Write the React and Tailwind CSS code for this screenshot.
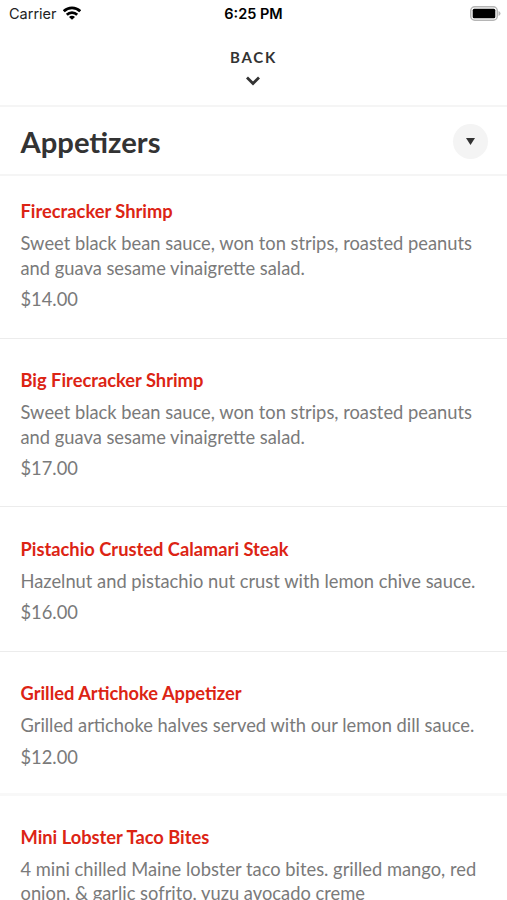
import { clsx } from "clsx";

const items = [
  {
    name: "Firecracker Shrimp",
    lines: ["Sweet black bean sauce, won ton strips, roasted peanuts", "and guava sesame vinaigrette salad."],
    price: "$14.00",
  },
  {
    name: "Big Firecracker Shrimp",
    lines: ["Sweet black bean sauce, won ton strips, roasted peanuts", "and guava sesame vinaigrette salad."],
    price: "$17.00",
  },
  {
    name: "Pistachio Crusted Calamari Steak",
    lines: ["Hazelnut and pistachio nut crust with lemon chive sauce."],
    price: "$16.00",
  },
  {
    name: "Grilled Artichoke Appetizer",
    lines: ["Grilled artichoke halves served with our lemon dill sauce."],
    price: "$12.00",
    divider: "pb-[24.75px] border-b-3 border-[#f8f8f8]",
  },
  {
    name: "Mini Lobster Taco Bites",
    lines: ["4 mini chilled Maine lobster taco bites. grilled mango, red", "onion, & garlic sofrito, yuzu avocado creme"],
    divider: "-mt-px",
  },
];

function StatusBar() {
  return (
    <div className="grid h-7 grid-cols-3 items-center pr-1.5 pl-[9px] font-['Inter',sans-serif] text-[14.5px] text-black">
      <div className="flex items-center gap-1.5">
        <span className="text-[#222]">Carrier</span>
        <svg className="-mt-0.5" width="18" height="14" viewBox="0 0 18 14" fill="none" stroke="#000" strokeWidth="2.7">
          <path d="M.8 5.2a11.6 11.6 0 0 1 16.4 0" />
          <path d="M3.8 8.8a7.4 7.4 0 0 1 10.4 0" />
          <path d="M9 13.8 6 10.9a4.2 4.2 0 0 1 6 0z" fill="#000" stroke="none" />
        </svg>
      </div>
      <div className="pr-[3px] text-center font-semibold">6:25 PM</div>
      <svg className="-mt-0.5 justify-self-end" width="31" height="15" viewBox="0 0 31 15">
        <rect x="0.75" y="0.75" width="26.5" height="13.5" rx="4" fill="none" stroke="#b5b5b5" strokeWidth="1.5" />
        <rect x="2.7" y="2.7" width="22.6" height="9.6" rx="1.5" />
        <path d="M28.5 5q2 .8 2 2.5t-2 2.5z" fill="#b5b5b5" />
      </svg>
    </div>
  );
}

function MenuItem({ item, first }) {
  return (
    <div
      className={clsx(
        "px-[20.5px]",
        first ? "pt-[23.25px]" : "pt-[29.5px]",
        item.divider || "border-b border-[#ececec] pb-[26.25px]"
      )}
    >
      <h2 className="text-[18.3px] leading-6 font-bold text-[#dc2414]">{item.name}</h2>
      <div className="mt-2 text-[18.32px] leading-[24.5px] text-[#7a7a7a]">
        {item.lines.map((line) => (
          <p key={line} className="whitespace-nowrap">{line}</p>
        ))}
      </div>
      {item.price && <p className="mt-[7px] text-[18.32px] leading-6 text-[#7a7a7a]">{item.price}</p>}
    </div>
  );
}

function App() {
  return (
    <div className="h-[900px] w-full overflow-hidden bg-white font-['Lato',sans-serif]">
      <StatusBar />
      <button className="flex h-[79px] w-full flex-col items-center border-b-2 border-[#f5f5f5] pt-[19px] text-[#333]">
        <span className="text-[15px] leading-5 font-bold tracking-[1.7px]">BACK</span>
        <svg className="mt-[9px] mr-0.5" width="14" height="10" viewBox="0 0 14 10" fill="none" stroke="#333" strokeWidth="2.8">
          <path d="m1 1.5 6 6 6-6" />
        </svg>
      </button>
      <div className="flex h-[69px] items-center justify-between border-b-2 border-[#f5f5f5] pr-[19px] pl-[20.5px]">
        <h1 className="pt-0.5 text-[29.2px] font-bold text-[#333]">Appetizers</h1>
        <button className="mt-0.5 flex size-[35px] items-center justify-center rounded-full bg-[#f4f4f4]">
          <svg width="9" height="7" viewBox="0 0 9 7">
            <path d="M0 0h9L4.5 7z" fill="#333" />
          </svg>
        </button>
      </div>
      {items.map((item, i) => (
        <MenuItem key={item.name} item={item} first={i === 0} />
      ))}
    </div>
  );
}

export default App;
